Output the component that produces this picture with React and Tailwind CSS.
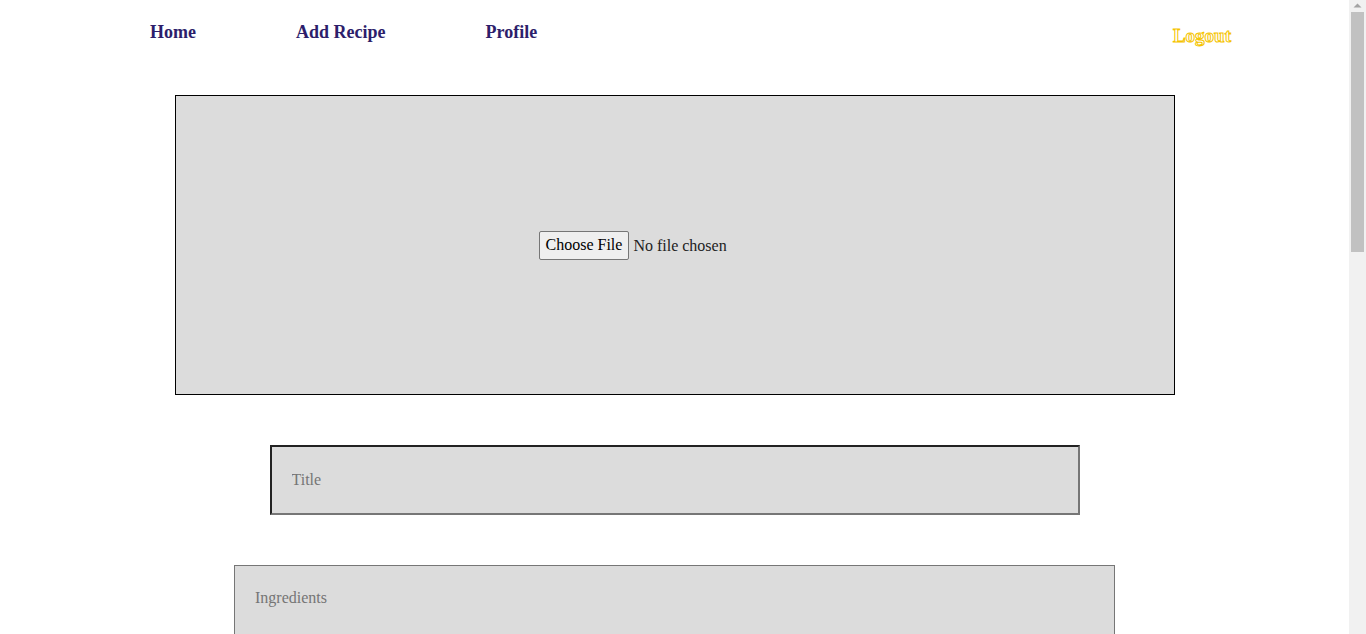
import { useState } from "react";

// Add recipe page : nav + image upload + form fields
const navLinks = ["Home", "Add Recipe", "Profile"];

function Scrollbar() {
  // barre de défilement dessinée (le navigateur headless la masque)
  return (
    <div className="w-[17px] shrink-0 bg-[#f1f1f1] flex flex-col items-center">
      <svg width="17" height="12" viewBox="0 0 17 12" className="shrink-0">
        <path d="M4.5 7.5 L8.5 3.5 L12.5 7.5 Z" fill="#a3a3a3" />
      </svg>
      <div className="w-[13px] h-[240px] bg-[#c1c1c1]" />
    </div>
  );
}

export default function App() {
  const [title, setTitle] = useState("");
  const [ingredients, setIngredients] = useState("");
  const [steps, setSteps] = useState("");

  return (
    <div className="h-[634px] flex overflow-hidden bg-white font-['Liberation_Serif',serif] text-black">
      <div className="flex-1 min-w-0 overflow-hidden">
        <header className="flex items-start justify-between pl-[150px] pr-[118px] pt-[19px]">
          <nav className="flex gap-[100px]">
            {navLinks.map((l) => (
              <a
                key={l}
                href="#"
                className="text-[18px] leading-[27px] font-bold text-[#2d1e6b]"
              >
                {l}
              </a>
            ))}
          </nav>
          <a
            href="#"
            className="mt-[2px] text-[19px] leading-[30px] font-bold text-white [-webkit-text-stroke:1px_#f5c400]"
          >
            Logout
          </a>
        </header>

        <main className="flex flex-col items-center mt-[44px] pb-[100px]">
          <div className="w-[1000px] h-[300px] shrink-0 border border-black bg-[#dcdcdc] flex items-center justify-center">
            <input
              type="file"
              className="text-[16px] leading-[24px] text-[#222] file:mr-[4px] file:border file:border-[#767676] file:rounded-[2px] file:bg-[#efefef] file:px-[6px] file:py-[1.5px] file:text-black"
            />
          </div>

          <input
            type="text"
            placeholder="Title"
            value={title}
            onChange={(e) => setTitle(e.target.value)}
            className="mt-[50px] w-[810px] h-[70px] shrink-0 border-2 border-t-[#222] border-l-[#222] border-b-[#767676] border-r-[#767676] bg-[#dcdcdc] px-[20px] text-[16px] placeholder:text-[#757575] outline-none"
          />

          <textarea
            placeholder="Ingredients"
            value={ingredients}
            onChange={(e) => setIngredients(e.target.value)}
            className="mt-[50px] w-[881px] h-[250px] shrink-0 border border-[#767676] bg-[#dcdcdc] p-[20px] text-[16px] placeholder:text-[#757575] outline-none resize-none"
          />

          <textarea
            placeholder="Steps"
            value={steps}
            onChange={(e) => setSteps(e.target.value)}
            className="mt-[50px] w-[881px] h-[350px] shrink-0 border border-[#767676] bg-[#dcdcdc] p-[20px] text-[16px] placeholder:text-[#757575] outline-none resize-none"
          />

          <button
            type="button"
            className="mt-[50px] px-[30px] py-[10px] border border-[#767676] bg-[#efefef] text-[18px] font-bold text-[#2d1e6b]"
          >
            Add Recipe
          </button>
        </main>
      </div>
      <Scrollbar />
    </div>
  );
}
